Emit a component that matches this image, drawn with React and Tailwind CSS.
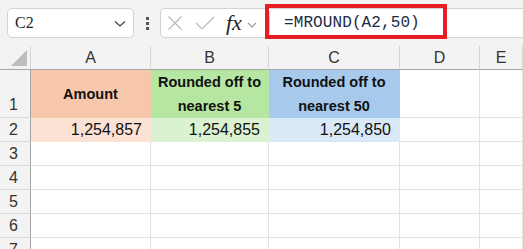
import { Fragment } from "react";

const sans = { fontFamily: '"Liberation Sans", Arial, sans-serif' };

const columns = ["A", "B", "C", "D", "E"];

const row1 = [
  { text: ["Amount"], fill: "bg-[#f7c7ac] border-[#f7c7ac]" },
  { text: ["Rounded off to", "nearest 5"], fill: "bg-[#b5e6a2] border-[#b5e6a2]" },
  { text: ["Rounded off to", "nearest 50"], fill: "bg-[#a6c9ec] border-[#a6c9ec]" },
  { text: [], fill: "bg-white border-[#e1e1e1]" },
  { text: [], fill: "bg-white border-[#e1e1e1]" },
];

const row2 = [
  { text: "1,254,857", fill: "bg-[#fbe2d5] border-[#fbe2d5]" },
  { text: "1,254,855", fill: "bg-[#daf2d0] border-[#daf2d0]" },
  { text: "1,254,850", fill: "bg-[#dae9f8] border-[#dae9f8]" },
  { text: "", fill: "bg-white border-[#e1e1e1]" },
  { text: "", fill: "bg-white border-[#e1e1e1]" },
];

function RowHead({ n, bottom }) {
  return (
    <div
      className={`flex pl-[9px] bg-[#f3f3f3] border-r border-r-[#a5a5a5] border-b border-b-[#d9d9d9] text-[16px] text-[#333] leading-[24px] ${
        bottom ? "items-end" : "items-center"
      }`}
    >
      {n}
    </div>
  );
}

export default function App() {
  return (
    <div className="w-[523px] h-[249px] overflow-hidden bg-[#f3f3f3]" style={sans}>
      {/* formula bar */}
      <div className="relative h-[46px] flex items-start pt-[8px] pl-[7px]">
        <div className="w-[127px] h-[30px] flex items-center justify-between pl-[7px] pr-[7px] bg-white border border-[#d2d2d2] rounded-[5px]">
          <span className="text-[16px] text-[#1f1f1f]" style={{ fontFamily: '"Liberation Serif", serif' }}>
            C2
          </span>
          <svg width="12" height="8" viewBox="0 0 12 8" className="mt-[2px]">
            <path d="M1 1.5 L6 6 L11 1.5" fill="none" stroke="#444" strokeWidth="1.3" />
          </svg>
        </div>
        <div className="w-[26px] h-[30px] flex flex-col items-center justify-center gap-[2px]">
          <span className="w-[3px] h-[3px] bg-[#555]" />
          <span className="w-[3px] h-[3px] bg-[#555]" />
          <span className="w-[3px] h-[3px] bg-[#555]" />
        </div>
        <div className="flex-1 h-[30px] flex items-center bg-white border border-[#d2d2d2] rounded-l-[5px] -mr-[6px]">
          <div className="w-[108px] h-full flex items-center pl-[6px] shrink-0">
            <svg width="16" height="16" viewBox="0 0 16 16">
              <path d="M1.5 1.5 L14.5 14.5 M14.5 1.5 L1.5 14.5" stroke="#b8b8b8" strokeWidth="1.2" />
            </svg>
            <svg width="20" height="14" viewBox="0 0 20 14" className="ml-[12px]">
              <path d="M1 7 L7 13 L19 1" fill="none" stroke="#b8b8b8" strokeWidth="1.2" />
            </svg>
            <span
              className="ml-[11px] text-[22px] italic text-[#222] leading-none"
              style={{ fontFamily: '"Liberation Serif", serif' }}
            >
              fx
            </span>
            <svg width="10" height="6" viewBox="0 0 10 6" className="ml-[5px] mt-[3px]">
              <path d="M1 1 L5 5 L9 1" fill="none" stroke="#9a9a9a" strokeWidth="1.1" />
            </svg>
          </div>
          <div className="flex-1 h-[26px] flex items-center pl-[14px] border-l border-[#d2d2d2] rounded-l-[4px]">
            <span
              className="text-[16px] text-[#1c2b45] tracking-[0.1px]"
              style={{ fontFamily: '"Liberation Mono", "DejaVu Sans Mono", monospace' }}
            >
              =MROUND(A2,50)
            </span>
          </div>
        </div>
        {/* red annotation */}
        <div className="absolute left-[265px] top-[4px] w-[182px] h-[35px] border-4 border-[#e81c24]" />
      </div>

      {/* grid */}
      <div className="grid grid-cols-[31px_120px_118px_131px_80px_1fr] grid-rows-[24px_48px_24px_24px_24px_24px_24px_24px]">
        <div className="relative bg-[#f3f3f3] border-r border-r-[#d6d6d6] border-b border-b-[#a5a5a5]">
          <svg width="16" height="16" viewBox="0 0 16 16" className="absolute left-[11px] bottom-[3px]">
            <path d="M16 0 L16 16 L0 16 Z" fill="#bdbdbd" />
          </svg>
        </div>
        {columns.map((c) => (
          <div
            key={c}
            className="flex items-center justify-center bg-[#f3f3f3] border-r border-r-[#d6d6d6] border-b border-b-[#a5a5a5] text-[16px] text-[#333]"
          >
            {c}
          </div>
        ))}

        <RowHead n="1" bottom />
        {row1.map((cell, i) => (
          <div
            key={i}
            className={`flex flex-col items-center justify-center border-r border-b ${cell.fill} text-[14.5px] font-bold text-[#111] leading-[24px]`}
          >
            {cell.text.map((t) => (
              <span key={t}>{t}</span>
            ))}
          </div>
        ))}

        <RowHead n="2" />
        {row2.map((cell, i) => (
          <div
            key={i}
            className={`flex items-center justify-end pr-[8px] border-r border-b ${cell.fill} text-[16px] text-[#111]`}
          >
            {cell.text}
          </div>
        ))}

        {["3", "4", "5", "6", "7"].map((n) => (
          <Fragment key={n}>
            <RowHead n={n} />
            {columns.map((c) => (
              <div key={`${c}${n}`} className="bg-white border-r border-b border-[#e1e1e1]" />
            ))}
          </Fragment>
        ))}
      </div>
    </div>
  );
}
